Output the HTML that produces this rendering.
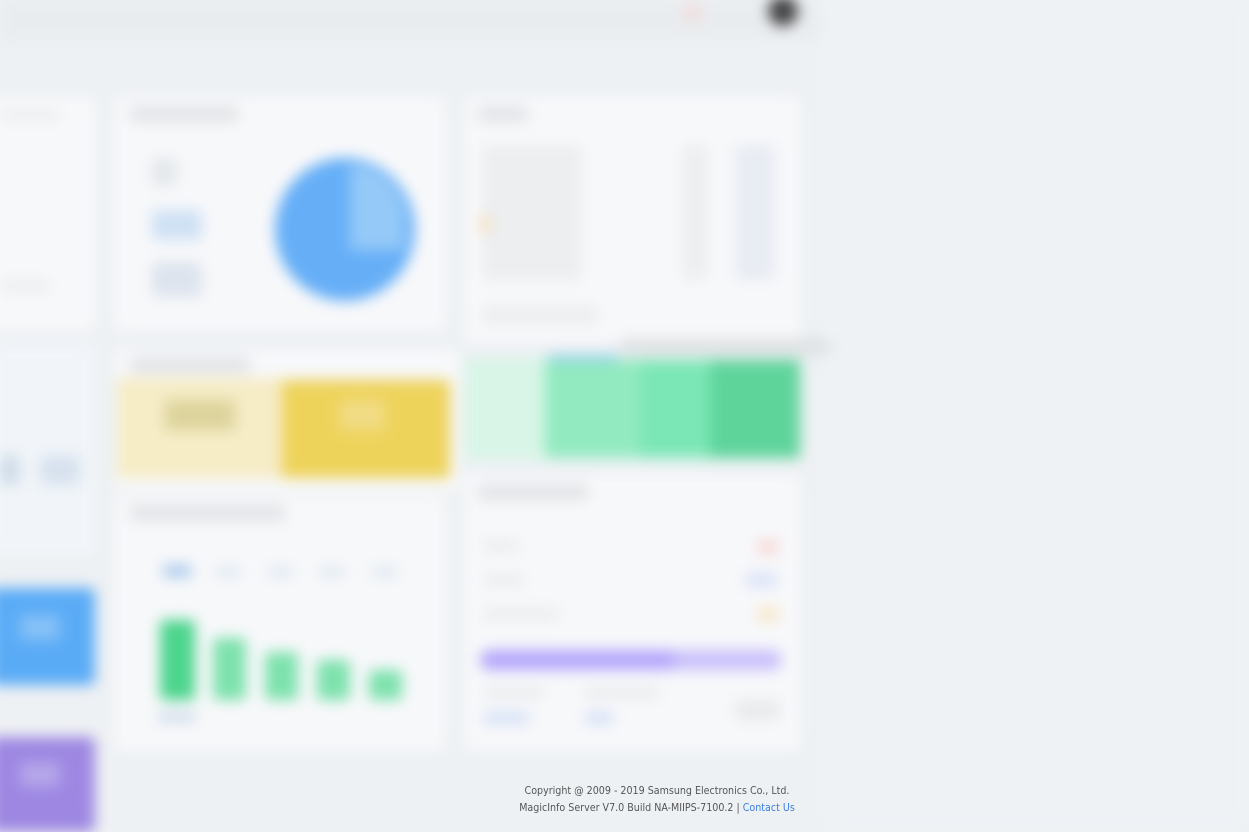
<!DOCTYPE html>
<html><head><meta charset="utf-8"><style>
html,body{margin:0;padding:0;width:1249px;height:827px;overflow:hidden;background:#eef1f4;font-family:"Liberation Sans",sans-serif}
#b{position:absolute;left:0;top:0;width:1249px;height:827px;filter:blur(7px)}
.r{position:absolute}
.card{position:absolute;background:#f7f8fa;border-radius:6px}
.t{position:absolute;background:#e2e4e7;border-radius:3px}
#f{position:absolute;left:457px;top:783px;width:400px;text-align:center;font-size:10.6px;line-height:17px;color:#555;font-family:"DejaVu Sans Condensed","Liberation Sans Narrow","Liberation Sans",sans-serif;font-stretch:condensed}
#f a{color:#3a7de0;text-decoration:none}
</style></head><body>
<div id="b">
<div class="r" style="left:0;top:0;width:820px;height:40px;background:#e9ecef"></div>
<div class="r" style="left:820px;top:0;width:429px;height:827px;background:#eef2f5"></div>
<div class="r" style="left:768px;top:-4px;width:30px;height:30px;border-radius:50%;background:#444"></div>
<div class="r" style="left:683px;top:2px;width:20px;height:20px;border-radius:50%;background:#f0dede"></div>
<div class="card" style="left:-10px;top:97px;width:105px;height:233px"></div>
<div class="t" style="left:0;top:108px;width:60px;height:14px;background:#eef0f2"></div>
<div class="t" style="left:0;top:280px;width:50px;height:12px;background:#eceef0"></div>
<div class="card" style="left:-10px;top:345px;width:105px;height:210px;background:#f1f5f9"></div>
<div class="r" style="left:0;top:455px;width:20px;height:30px;background:#cfdcea;border-radius:4px"></div>
<div class="r" style="left:40px;top:455px;width:40px;height:30px;background:#d7e2ee;border-radius:4px"></div>
<div class="r" style="left:-10px;top:588px;width:105px;height:97px;background:#5aabf6;border-radius:6px"></div>
<div class="r" style="left:20px;top:615px;width:40px;height:25px;background:#86c1f7"></div>
<div class="r" style="left:-10px;top:737px;width:105px;height:95px;background:#9d87e2;border-radius:6px"></div>
<div class="r" style="left:20px;top:762px;width:40px;height:25px;background:#b5a6ea"></div>
<div class="card" style="left:115px;top:97px;width:330px;height:233px"></div>
<div class="t" style="left:130px;top:106px;width:108px;height:16px"></div>
<div class="t" style="left:152px;top:158px;width:25px;height:28px;background:#e4e7eb"></div>
<div class="t" style="left:152px;top:210px;width:50px;height:30px;background:#cfe1f5"></div>
<div class="t" style="left:152px;top:262px;width:50px;height:35px;background:#dde4ee"></div>
<div class="r" style="left:275px;top:158px;width:140px;height:143px;border-radius:50%;background:#66aff7"></div>
<div class="r" style="left:350px;top:165px;width:55px;height:85px;border-radius:0 60px 0 0;background:#95c9f8"></div>
<div class="card" style="left:465px;top:97px;width:335px;height:245px"></div>
<div class="t" style="left:478px;top:106px;width:50px;height:16px"></div>
<div class="t" style="left:482px;top:145px;width:100px;height:135px;background:#eceef0"></div>
<div class="t" style="left:683px;top:145px;width:25px;height:135px;background:#eceef0"></div>
<div class="t" style="left:735px;top:145px;width:40px;height:135px;background:#e8ecf3"></div>
<div class="t" style="left:482px;top:305px;width:115px;height:20px;background:#eceef0"></div>
<div class="r" style="left:480px;top:215px;width:10px;height:18px;background:#f7e2bb"></div>
<div class="r" style="left:620px;top:338px;width:210px;height:18px;background:#dfe2e4"></div>
<div class="card" style="left:115px;top:350px;width:345px;height:140px"></div>
<div class="t" style="left:130px;top:357px;width:120px;height:16px"></div>
<div class="r" style="left:117px;top:378px;width:165px;height:100px;background:#f6ecc6"></div>
<div class="r" style="left:165px;top:400px;width:70px;height:30px;background:#dcd39c"></div>
<div class="r" style="left:282px;top:380px;width:168px;height:98px;background:#eed35b"></div>
<div class="r" style="left:340px;top:400px;width:45px;height:30px;background:#f1dc86"></div>
<div class="r" style="left:465px;top:358px;width:82px;height:102px;background:#d8f5e7"></div>
<div class="r" style="left:545px;top:360px;width:95px;height:98px;background:#92eac0"></div>
<div class="r" style="left:548px;top:355px;width:70px;height:6px;background:#8ecdf0"></div>
<div class="r" style="left:640px;top:360px;width:70px;height:98px;background:#7be7b6"></div>
<div class="r" style="left:710px;top:360px;width:90px;height:98px;background:#5ed49b"></div>
<div class="card" style="left:115px;top:497px;width:330px;height:253px"></div>
<div class="t" style="left:130px;top:505px;width:155px;height:16px"></div>
<div class="r" style="left:160px;top:620px;width:35px;height:80px;background:#4cd58d;border-radius:4px"></div>
<div class="r" style="left:213px;top:638px;width:33px;height:62px;background:#7de2ad;border-radius:4px"></div>
<div class="r" style="left:265px;top:652px;width:33px;height:48px;background:#7de2ad;border-radius:4px"></div>
<div class="r" style="left:317px;top:660px;width:33px;height:40px;background:#7de2ad;border-radius:4px"></div>
<div class="r" style="left:369px;top:670px;width:33px;height:30px;background:#7de2ad;border-radius:4px"></div>
<div class="r" style="left:163px;top:565px;width:28px;height:12px;background:#a8c9ec"></div>
<div class="r" style="left:215px;top:567px;width:25px;height:10px;background:#dde7f1"></div>
<div class="r" style="left:268px;top:567px;width:25px;height:10px;background:#dde7f1"></div>
<div class="r" style="left:320px;top:567px;width:25px;height:10px;background:#dde7f1"></div>
<div class="r" style="left:372px;top:567px;width:25px;height:10px;background:#dde7f1"></div>
<div class="r" style="left:158px;top:712px;width:38px;height:10px;background:#cfdcea"></div>
<div class="card" style="left:465px;top:475px;width:335px;height:275px"></div>
<div class="t" style="left:478px;top:484px;width:110px;height:16px"></div>
<div class="t" style="left:484px;top:540px;width:35px;height:12px;background:#eaecee"></div>
<div class="t" style="left:484px;top:574px;width:40px;height:12px;background:#eaecee"></div>
<div class="t" style="left:484px;top:608px;width:75px;height:12px;background:#eaecee"></div>
<div class="r" style="left:758px;top:540px;width:20px;height:14px;background:#f7d6d6"></div>
<div class="r" style="left:745px;top:573px;width:32px;height:14px;background:#dbe3f8"></div>
<div class="r" style="left:758px;top:607px;width:20px;height:14px;background:#f7e6c8"></div>
<div class="r" style="left:480px;top:650px;width:302px;height:20px;background:#c9c0fb;border-radius:10px"></div>
<div class="r" style="left:480px;top:650px;width:195px;height:20px;background:#b4a7fb;border-radius:10px"></div>
<div class="t" style="left:484px;top:688px;width:60px;height:10px;background:#e8eaec"></div>
<div class="r" style="left:484px;top:712px;width:45px;height:12px;background:#d5e0f6"></div>
<div class="t" style="left:585px;top:688px;width:75px;height:10px;background:#e8eaec"></div>
<div class="r" style="left:585px;top:712px;width:28px;height:12px;background:#d5e0f6"></div>
<div class="t" style="left:735px;top:700px;width:45px;height:20px;background:#e8eaec"></div>
</div>
<div id="f">Copyright @ 2009 - 2019 Samsung Electronics Co., Ltd.<br>MagicInfo Server V7.0 Build NA-MIIPS-7100.2 | <a>Contact Us</a></div>
</body></html>
